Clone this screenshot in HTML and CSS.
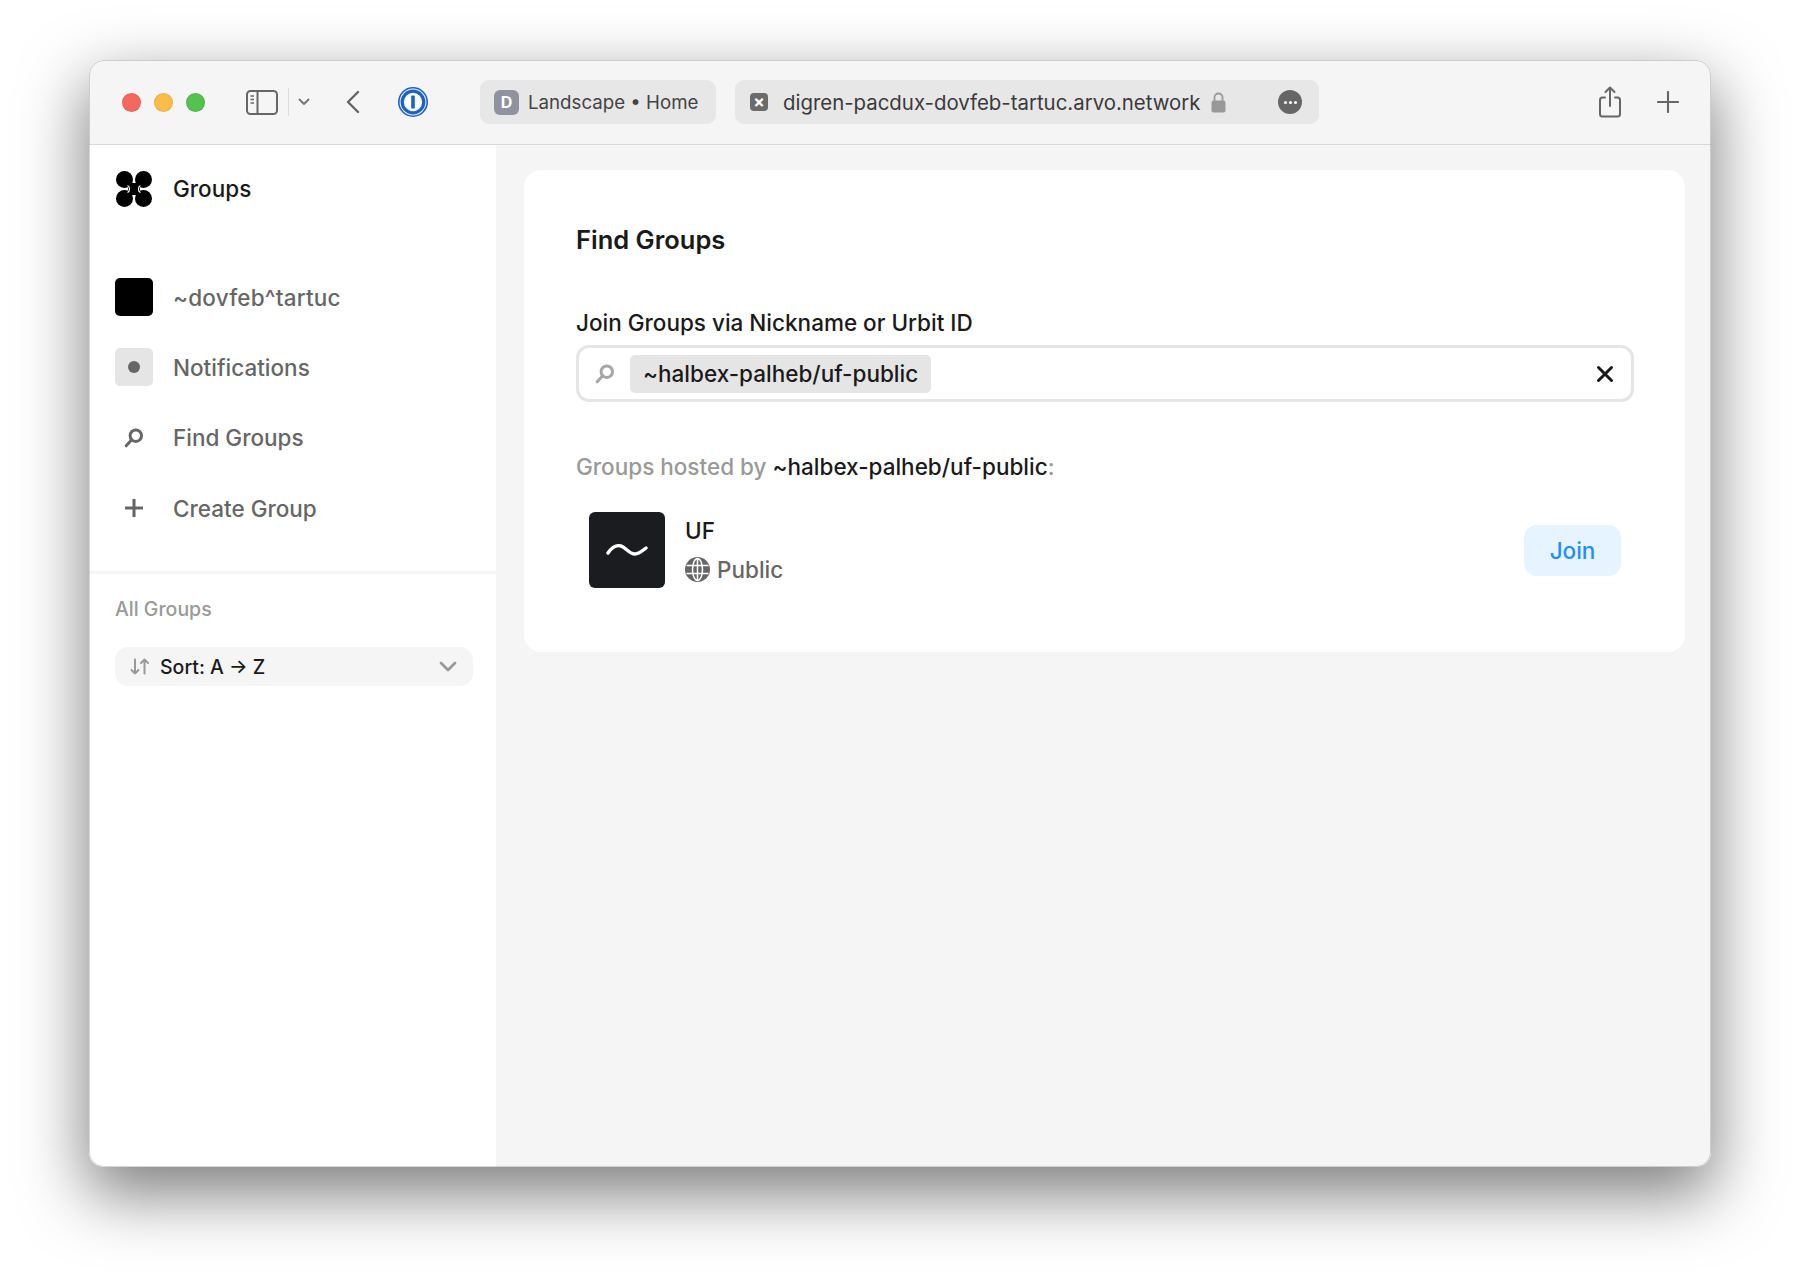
FILE: index.html
```html
<!DOCTYPE html>
<html lang="en">
<head>
<meta charset="utf-8">
<title>Groups</title>
<link rel="stylesheet" href="styles.css">
</head>
<body>
<div class="window">
  <header class="toolbar">
    <div class="lights"><i class="light red"></i><i class="light yellow"></i><i class="light green"></i></div>
    <svg class="ic-sidebar" width="32" height="25" viewBox="0 0 32 25" fill="none" stroke="#666" stroke-width="2"><rect x="1" y="1" width="30" height="23" rx="3.500"/><path d="M11.500 1v23"/><path d="M4.500 6h3.500M4.500 9.500h3.500M4.500 13h3.500" stroke-width="1.500"/></svg>
    <span class="tb-sep"></span>
    <svg class="ic-drop" width="12" height="8" viewBox="0 0 12 8" fill="none" stroke="#777" stroke-width="1.900" stroke-linecap="round" stroke-linejoin="round"><path d="M1.500 1.500 6 6l4.500-4.500"/></svg>
    <svg class="ic-back" width="14" height="24" viewBox="0 0 14 24" fill="none" stroke="#666" stroke-width="2.400" stroke-linecap="round" stroke-linejoin="round"><path d="M12 2 2 12l10 10"/></svg>
    <svg class="ic-1p" width="30" height="30" viewBox="0 0 30 30"><circle cx="15" cy="15" r="14.200" fill="none" stroke="#1a62c9" stroke-width="1.600"/><circle cx="15" cy="15" r="10.800" fill="none" stroke="#1a62c9" stroke-width="3.200"/><circle cx="15" cy="15" r="8" fill="#fff"/><rect x="13.200" y="8.500" width="3.600" height="13" rx=".8" fill="#1a62c9"/></svg>
    <div class="tab tab-home">
      <span class="fav fav-d">D</span>
      <span class="tab-text">Landscape • Home</span>
    </div>
    <div class="tab tab-url">
      <span class="fav fav-x">×</span>
      <span class="tab-text url">digren-pacdux-dovfeb-tartuc.arvo.network</span>
      <svg class="ic-lock" width="15" height="21" viewBox="0 0 15 21" fill="none"><path d="M3.500 9V5.500a4 4 0 0 1 8 0V9" stroke="#999" stroke-width="1.800"/><rect x=".5" y="8.500" width="14" height="12" rx="2" fill="#999"/></svg>
      <span class="more"><i></i><i></i><i></i></span>
    </div>
    <svg class="ic-share" width="24" height="32" viewBox="0 0 24 32" fill="none" stroke="#666" stroke-width="2" stroke-linecap="round" stroke-linejoin="round"><path d="M7 11.500H4.500A2.500 2.500 0 0 0 2 14v14a2.500 2.500 0 0 0 2.500 2.500h15A2.500 2.500 0 0 0 22 28V14a2.500 2.500 0 0 0-2.500-2.500H17"/><path d="M12 20V1.500M7.500 6 12 1.500 16.500 6"/></svg>
    <svg class="ic-plus" width="22" height="22" viewBox="0 0 22 22" fill="none" stroke="#666" stroke-width="2.100" stroke-linecap="round"><path d="M11 1v20M1 11h20"/></svg>
  </header>
  <div class="content">
    <aside class="sidebar">
      <div class="brand">
        <svg class="logo" width="36" height="36" viewBox="0 0 36 36" fill="#000"><circle cx="8.500" cy="8.500" r="8.500"/><circle cx="27.500" cy="8.500" r="8.500"/><circle cx="8.500" cy="27.500" r="8.500"/><circle cx="27.500" cy="27.500" r="8.500"/><rect x="12" y="12" width="12" height="12"/><path d="M11.500 14.500c1.500.5 2 1.500 2 3.500s-.5 3-2 3.500M24.500 14.500c-1.500.5-2 1.500-2 3.500s.5 3 2 3.500" fill="none" stroke="#fff" stroke-width="1.300"/></svg>
        <span class="brand-name">Groups</span>
      </div>
      <nav class="nav">
        <div class="nav-row"><span class="nav-ic avatar"></span><span class="ship">~dovfeb^tartuc</span></div>
        <div class="nav-row"><span class="nav-ic bell"><i></i></span><span>Notifications</span></div>
        <div class="nav-row"><span class="nav-ic"><svg width="20" height="20" viewBox="0 0 20 20" fill="none" stroke="#666" stroke-width="3" stroke-linecap="round"><circle cx="11.800" cy="7.700" r="5.700"/><path d="M7.500 12 2.200 17.800"/></svg></span><span>Find Groups</span></div>
        <div class="nav-row"><span class="nav-ic"><svg width="20" height="20" viewBox="0 0 20 20" fill="none" stroke="#666" stroke-width="3" stroke-linecap="butt"><path d="M10 1v18M1 10h18"/></svg></span><span>Create Group</span></div>
      </nav>
      <div class="side-rule"></div>
      <div class="all-groups">All Groups</div>
      <div class="sort">
        <svg width="20" height="17" viewBox="0 0 20 17" fill="none" stroke="#999" stroke-width="2" stroke-linecap="round" stroke-linejoin="round"><path d="M5 1.500v14M1.500 12 5 15.500 8.500 12M14.500 15.500v-14M11 5l3.500-3.500L18 5"/></svg>
        <span class="sort-text">Sort: A → Z</span>
        <svg class="sort-chev" width="18" height="11" viewBox="0 0 18 11" fill="none" stroke="#999" stroke-width="2.800" stroke-linecap="round" stroke-linejoin="round"><path d="M2 2l7 7 7-7"/></svg>
      </div>
    </aside>
    <main class="main">
      <section class="card">
        <h1 class="title">Find Groups</h1>
        <label class="label">Join Groups via Nickname or Urbit ID</label>
        <div class="search">
          <svg width="20" height="20" viewBox="0 0 20 20" fill="none" stroke="#a6a6a6" stroke-width="3" stroke-linecap="round"><circle cx="11.800" cy="7.700" r="5.700"/><path d="M7.500 12 2.200 17.800"/></svg>
          <span class="chip">~halbex-palheb/uf-public</span>
          <svg class="clear" width="18" height="18" viewBox="0 0 18 18" fill="none" stroke="#1a1a1a" stroke-width="3" stroke-linecap="round"><path d="M2.500 2.500l13 13M15.500 2.500l-13 13"/></svg>
        </div>
        <p class="hosted">Groups hosted by <b>~halbex-palheb/uf-public</b>:</p>
        <div class="group">
          <span class="group-av"><svg width="42" height="18" viewBox="0 0 42 18" fill="none" stroke="#fff" stroke-width="3.400" stroke-linecap="round"><path d="M2 12C6 6 10 3.500 15 5s8 8 14 8c4 0 7-3 11-6"/></svg></span>
          <div class="group-info">
            <div class="group-name">UF</div>
            <div class="group-meta">
              <svg width="25" height="25" viewBox="0 0 25 25"><circle cx="12.500" cy="12.500" r="12.500" fill="#666"/><g fill="none" stroke="#fff" stroke-width="1.500"><ellipse cx="12.500" cy="12.500" rx="5" ry="11"/><path d="M12.500 1v23M1.500 8.500h22M1.500 16.500h22"/></g></svg>
              <span>Public</span>
            </div>
          </div>
          <button class="join">Join</button>
        </div>
      </section>
    </main>
  </div>
</div>
</body>
</html>
```
FILE: styles.css
```css
* { box-sizing: border-box; }
html, body { margin: 0; height: 100%; }
body {
  background: #fff;
  padding: 60px 89px 118px;
  font-family: Inter, "Liberation Sans", sans-serif;
  overflow: hidden;
}
.window {
  height: 1107px;
  border-radius: 15px;
  background: #fff;
  overflow: hidden;
  display: flex;
  flex-direction: column;
  outline: 1px solid rgba(0, 0, 0, .16);
  outline-offset: -1px;
  box-shadow: 0 25px 65px 3px rgba(0, 0, 0, .5);
}

.toolbar {
  height: 85px;
  flex: none;
  background: #f5f5f5;
  border-bottom: 1px solid #d9d9d9;
  display: flex;
  align-items: center;
  padding-left: 33px;
}
.lights { display: flex; gap: 13px; }
.light { width: 19px; height: 19px; border-radius: 50%; border: 1px solid rgba(0, 0, 0, .08); }
.red { background: #f6685e; }
.yellow { background: #fbbc4a; }
.green { background: #54c24f; }
.ic-sidebar { margin-left: 41px; }
.tb-sep { width: 1px; height: 28px; background: #dcdcdc; margin-left: 10px; }
.ic-drop { margin-left: 9px; }
.ic-back { margin-left: 36px; }
.ic-1p { margin-left: 38px; }

.tab {
  height: 44px;
  background: #e7e7e7;
  border-radius: 9px;
  display: flex;
  align-items: center;
}
.tab-home { width: 236px; margin-left: 52px; padding-left: 14px; }
.tab-url { width: 584px; margin-left: 19px; padding-left: 15px; }
.fav {
  display: flex;
  align-items: center;
  justify-content: center;
  color: #fff;
  font-weight: 700;
  border-radius: 4px;
  flex: none;
}
.fav-d { width: 25px; height: 25px; background: #9092a0; font-size: 16px; border-radius: 6px; }
.fav-x { width: 18px; height: 18px; background: #6b6b6b; font-size: 17px; }
.tab-text { margin-left: 9px; font-size: 18.700px; color: #444; white-space: nowrap; }
.url { margin-left: 15px; font-size: 20.400px; color: #3a3a3a; }
.ic-lock { margin-left: 11px; flex: none; }
.more {
  margin-left: 52px;
  width: 24px;
  height: 24px;
  border-radius: 50%;
  background: #666;
  display: flex;
  align-items: center;
  justify-content: center;
  gap: 2px;
  flex: none;
}
.more i { width: 3px; height: 3px; border-radius: 50%; background: #fff; }
.ic-share { margin-left: 279px; }
.ic-plus { margin-left: 35px; }

.content { flex: 1; display: flex; min-height: 0; }
.sidebar { width: 407px; flex: none; background: #fff; }
.brand { display: flex; align-items: center; padding: 15px 0 0 27px; height: 72px; }
.brand-name { margin-left: 21px; font-size: 22.500px; font-weight: 500; color: #1a1a1a; }
.nav { padding: 45px 0 0 26px; }
.nav-row {
  height: 70.300px;
  display: flex;
  align-items: center;
  font-size: 22.500px;
  font-weight: 500;
  color: #666;
}
.ship { letter-spacing: .2px; }
.nav-ic { width: 38px; height: 38px; display: flex; align-items: center; justify-content: center; margin-right: 20px; flex: none; border-radius: 5px; }
.avatar { background: #000; }
.bell { background: #e5e5e5; }
.bell i { width: 12px; height: 12px; border-radius: 50%; background: #666; }
.side-rule { height: 3px; background: #f5f5f5; margin-top: 28px; }
.all-groups { margin: 24px 0 0 26px; font-size: 19.500px; font-weight: 500; color: #999; line-height: 23px; }
.sort {
  margin: 26px 23px 0 26px;
  height: 39px;
  background: #f5f5f5;
  border-radius: 13px;
  display: flex;
  align-items: center;
  padding: 0 16px 0 15px;
}
.sort-text { margin-left: 10px; font-size: 19.500px; font-weight: 500; color: #1a1a1a; }
.sort-chev { margin-left: auto; }

.main { flex: 1; background: #f5f5f5; padding: 25px 26px 0 28px; }
.card {
  height: 482px;
  background: #fff;
  border-radius: 17px;
  padding: 56px 51px 0 52px;
}
.title { margin: 0; font-size: 25.500px; font-weight: 600; color: #1a1a1a; line-height: 28px; }
.label { display: block; margin-top: 55px; font-size: 22.500px; font-weight: 500; color: #1a1a1a; line-height: 28px; }
.search {
  margin-top: 8px;
  height: 57px;
  border: 3px solid #e5e5e5;
  border-radius: 13px;
  display: flex;
  align-items: center;
  padding: 0 17px 0 16px;
}
.chip {
  margin-left: 15px;
  height: 38px;
  padding: 0 13px;
  background: #e5e5e5;
  border-radius: 5px;
  display: flex;
  align-items: center;
  font-size: 22.500px;
  font-weight: 500;
  color: #1a1a1a;
}
.clear { margin-left: auto; }
.hosted { margin: 51px 0 0; font-size: 22.500px; font-weight: 500; color: #999; line-height: 28px; }
.hosted b { font-weight: 500; color: #1a1a1a; }
.group { margin-top: 31px; padding: 0 13px 0 13px; display: flex; align-items: center; }
.group-av { width: 76px; height: 76px; background: #1a1c20; border-radius: 6px; display: flex; align-items: center; justify-content: center; flex: none; }
.group-info { margin-left: 20px; padding-bottom: 2px; }
.group-name { font-size: 22.500px; font-weight: 500; color: #1a1a1a; line-height: 28px; }
.group-meta { margin-top: 12px; display: flex; align-items: center; gap: 7px; font-size: 22.500px; font-weight: 500; color: #666; line-height: 25px; }
.join {
  margin-left: auto;
  width: 97px;
  height: 51px;
  border: 0;
  border-radius: 13px;
  background: #e5f4ff;
  color: #1f8fff;
  font: 500 22.500px Inter, "Liberation Sans", sans-serif;
}
```
